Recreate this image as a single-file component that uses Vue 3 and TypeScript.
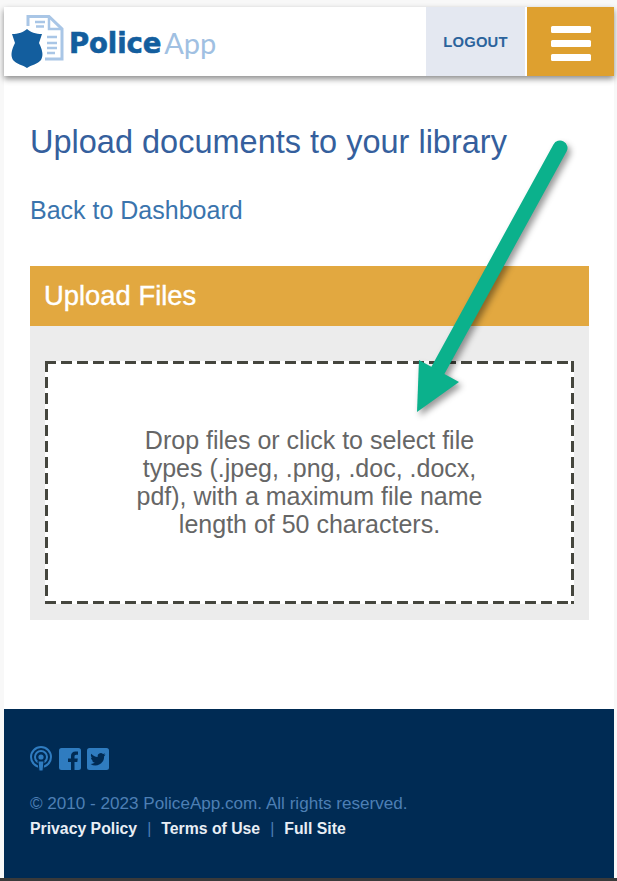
<template>
  <div class="page">
    <div class="shell">
      <header class="topbar">
        <div class="logo">
          <svg class="logo-mark" width="54" height="56" viewBox="0 0 54 56">
            <!-- листок -->
            <path d="M18 12V2.500h21L52 15v30H35" fill="none" stroke="#a9c6e6" stroke-width="3" />
            <path d="M39 2.500V15h13" fill="none" stroke="#a9c6e6" stroke-width="2.500" />
            <path d="M25 8h10M26 12.500h8M37 23h10M37 29h10M37 34h10M37 39h8" stroke="#a9c6e6" stroke-width="2.500" />
            <!-- щит -->
            <path d="M17 15c-3 3-9 5-15 5l3 9c-3 6-5 12-2 17 3 4 10 5 14 8 4-3 11-4 14-8 3-5 1-11-2-17l3-9c-6 0-12-2-15-5z" fill="#135e9e" />
          </svg>
          <span class="logo-name">Police</span><span class="logo-app">App</span>
        </div>
        <a class="logout">LOGOUT</a>
        <button class="burger" type="button" aria-label="Menu">
          <span></span><span></span><span></span>
        </button>
      </header>

      <main class="content">
        <h1 class="title">Upload documents to your library</h1>
        <a class="back">Back to Dashboard</a>

        <section class="panel">
          <h2 class="panel-head">Upload Files</h2>
          <div class="panel-body">
            <div class="drop">
              Drop files or click to select file types (.jpeg, .png, .doc, .docx, pdf), with a maximum file name length of 50 characters.
            </div>
          </div>
        </section>
      </main>

      <footer class="foot">
        <div class="socials">
          <svg width="24" height="26" viewBox="0 0 24 26" fill="none" stroke="#2f7cc0">
            <circle cx="12" cy="11" r="10" stroke-width="2" />
            <circle cx="12" cy="11" r="6" stroke-width="2" />
            <circle cx="12" cy="11" r="2.600" fill="#2f7cc0" stroke="none" />
            <path d="M9 15h6l-1 10h-4z" fill="#2f7cc0" stroke="#002b54" stroke-width="1" />
          </svg>
          <svg width="22" height="22" viewBox="0 0 22 22">
            <rect width="22" height="22" rx="2.500" fill="#2f7cc0" />
            <path d="M12 22v-8H9v-3.500h3V8c0-3 1.800-4.500 4.400-4.500H19v3.300h-1.700c-1.300 0-1.800.7-1.800 1.800v1.900h3.300l-.5 3.500h-2.800v8z" fill="#002b54" />
          </svg>
          <svg width="22" height="22" viewBox="0 0 22 22">
            <rect width="22" height="22" rx="2.500" fill="#2f7cc0" />
            <path d="M18.500 6.500c-.6.3-1.200.4-1.800.5.600-.4 1.100-1 1.300-1.700-.6.4-1.300.6-2 .8a3.100 3.100 0 0 0-5.300 2.800C8.100 8.800 5.800 7.600 4.300 5.700c-.8 1.400-.4 3.200 1 4.100-.5 0-1-.2-1.400-.4 0 1.500 1.100 2.800 2.500 3.100-.5.100-1 .1-1.400 0 .4 1.200 1.500 2.100 2.900 2.100A6.300 6.300 0 0 1 3.500 16a8.800 8.800 0 0 0 13.600-7.800c.6-.4 1-1 1.400-1.700z" fill="#002b54" />
          </svg>
        </div>
        <p class="copy">© 2010 - 2023 PoliceApp.com. All rights reserved.</p>
        <nav class="foot-links">
          <a>Privacy Policy</a><i>|</i><a>Terms of Use</a><i>|</i><a>Full Site</a>
        </nav>
      </footer>
    </div>

    <!-- стрелка лежит поверх всего -->
    <svg class="arrow" width="617" height="881" viewBox="0 0 617 881">
      <path d="M560 148 437 372" stroke="#0bb18c" stroke-width="15" stroke-linecap="round" />
      <path d="M419 360 459 382 417 412z" fill="#0bb18c" />
    </svg>
  </div>
</template>

<script setup lang="ts">
</script>

<style scoped>
.page {
  position: relative;
  width: 617px;
  height: 881px;
  box-sizing: border-box;
  padding: 7px 3px 0 4px;
  background: #f8f8f8;
  overflow: hidden;
  font-family: "Liberation Sans", Arial, sans-serif;
  border-bottom: 3px solid #3a3a3a;
}

.shell {
  height: 100%;
  display: flex;
  flex-direction: column;
  background: #fff;
}

.topbar {
  display: flex;
  align-items: stretch;
  height: 69px;
  flex: 0 0 auto;
  background: #fff;
  box-shadow: 0 3px 6px rgba(0, 0, 0, 0.45);
  position: relative;
}

.logo {
  flex: 1;
  display: flex;
  align-items: center;
  padding-left: 6px;
  margin-top: 2px;
}

.logo-mark {
  margin-right: 2px;
  margin-top: -1px;
}

.logo-name {
  font-family: "DejaVu Sans", "Liberation Sans", sans-serif;
  font-weight: 700;
  font-size: 27.500px;
  letter-spacing: -0.1px;
  -webkit-text-stroke: 0.6px #135e9e;
  color: #135e9e;
  margin-left: 3px;
}

.logo-app {
  font-family: Lato, "Liberation Sans", sans-serif;
  font-weight: 400;
  font-size: 29px;
  color: #a0c0e2;
  margin-left: 3px;
}

.logout {
  width: 99px;
  display: flex;
  align-items: center;
  justify-content: center;
  background: #e4e8f1;
  color: #2b639c;
  font-size: 14.800px;
  font-weight: 700;
  letter-spacing: 0.2px;
}

.burger {
  width: 87px;
  margin: 0 0 0 2px;
  padding: 3px 0 0;
  border: 0;
  background: #dea02f;
  display: flex;
  flex-direction: column;
  align-items: center;
  justify-content: center;
  gap: 7px;
}

.burger span {
  display: block;
  width: 40px;
  height: 7px;
  border-radius: 1.500px;
  background: #fff;
}

.content {
  flex: 1;
  padding: 0 25px 0 26px;
}

.title {
  margin: 47px 0 0;
  font-size: 32.500px;
  line-height: 38px;
  font-weight: 400;
  color: #355f9d;
}

.back {
  display: block;
  margin-top: 34px;
  font-size: 25px;
  line-height: 30px;
  color: #3a74ad;
}

.panel {
  margin-top: 41px;
}

.panel-head {
  margin: 0;
  height: 60px;
  padding-left: 14px;
  background: #e2a840;
  color: #fff;
  font-size: 27.400px;
  line-height: 59px;
  font-weight: 400;
  -webkit-text-stroke: 0.4px #fff;
}

.panel-body {
  padding: 35px 15px 16px;
  background: #ececec;
}

.drop {
  height: 243px;
  box-sizing: border-box;
  padding: 65px 86px 0;
  background-color: #fff;
  background-image:
    linear-gradient(90deg, #45463e 11px, transparent 0),
    linear-gradient(90deg, #45463e 11px, transparent 0),
    linear-gradient(#45463e 11px, transparent 0),
    linear-gradient(#45463e 11px, transparent 0);
  background-size: 16px 3px, 16px 3px, 3px 16px, 3px 16px;
  background-position: 0 0, 0 100%, 0 0, 100% 0;
  background-repeat: repeat-x, repeat-x, repeat-y, repeat-y;
  color: #666;
  font-size: 25px;
  line-height: 28px;
  text-align: center;
}

.foot {
  height: 169px;
  flex: 0 0 auto;
  box-sizing: border-box;
  padding: 37px 26px 0 25px;
  background: #002b54;
}

.socials {
  display: flex;
  align-items: center;
  gap: 6px;
  height: 26px;
}

.copy {
  margin: 22px 0 0 1px;
  font-size: 17.100px;
  line-height: 20px;
  color: #4d7fb4;
}

.foot-links {
  margin: 5px 0 0 1px;
  font-size: 15.800px;
  line-height: 20px;
  color: #e8eef5;
  font-weight: 700;
}

.foot-links i {
  font-style: normal;
  font-weight: 400;
  color: #4d7fb4;
  margin: 0 10px;
}

.arrow {
  position: absolute;
  left: 0;
  top: 0;
  pointer-events: none;
  filter: drop-shadow(3px 4px 3px rgba(0, 0, 0, 0.4));
}
</style>
